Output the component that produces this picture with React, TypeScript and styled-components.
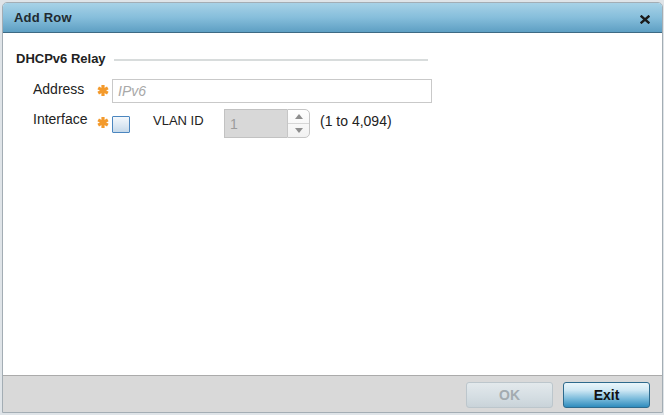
import React from "react";
import styled, { createGlobalStyle } from "styled-components";

const GlobalStyle = createGlobalStyle`
  html, body {
    margin: 0;
    padding: 0;
  }
  body {
    background: #dfe4e8;
    font-family: "Liberation Sans", Arial, sans-serif;
    color: #222;
  }
  #root {
    height: 415px;
  }
`;

const Page = styled.div`
  box-sizing: border-box;
  height: 415px;
  padding: 2px 1px 2px 2px;
`;

const Dialog = styled.div`
  box-sizing: border-box;
  height: 100%;
  display: flex;
  flex-direction: column;
  background: #ffffff;
  border: 1px solid #a3adb4;
  border-radius: 5px 5px 0 0;
  overflow: hidden;
`;

const TitleBar = styled.div`
  height: 30px;
  flex: none;
  display: flex;
  align-items: center;
  justify-content: space-between;
  padding: 0 12px 0 11px;
  box-sizing: border-box;
  background: linear-gradient(to bottom, #a7d2e7 0%, #86bedb 50%, #5e9fc3 100%);
  border-bottom: 1px solid #3d6a84;
`;

const Title = styled.span`
  font-size: 13px;
  line-height: 16px;
  font-weight: bold;
  color: #1f2a30;
  letter-spacing: 0.2px;
`;

const CloseButton = styled.span`
  display: flex;
  margin-top: 3px;
  cursor: pointer;
`;

const Body = styled.div`
  flex: 1;
  padding: 18px 13px 0 13px;
`;

const SectionHeader = styled.div`
  display: flex;
  align-items: flex-start;
`;

const SectionTitle = styled.span`
  font-size: 13px;
  line-height: 16px;
  font-weight: bold;
  color: #222;
`;

const Rule = styled.div`
  width: 314px;
  height: 2px;
  margin: 8px 0 0 8px;
  background: #d8dcdc;
`;

const Row = styled.div<{ $top: number }>`
  display: flex;
  align-items: flex-start;
  margin: ${(p) => p.$top}px 0 0 17px;
`;

const Label = styled.span<{ $size?: number; $width: number; $top: number }>`
  width: ${(p) => p.$width}px;
  flex: none;
  font-size: ${(p) => p.$size ?? 14}px;
  line-height: 16px;
  margin-top: ${(p) => p.$top}px;
  color: #222;
`;

const Star = styled.span<{ $top: number }>`
  width: 15px;
  flex: none;
  display: flex;
  margin-top: ${(p) => p.$top}px;
`;

const TextInput = styled.input`
  box-sizing: border-box;
  width: 320px;
  height: 24px;
  border: 1px solid #c9c9c9;
  padding: 0 5px;
  font-family: "Liberation Sans", Arial, sans-serif;
  font-size: 14px;
  outline: none;
  &::placeholder {
    font-style: italic;
    color: #a8a8a8;
  }
`;

const Checkbox = styled.span`
  box-sizing: border-box;
  width: 18px;
  height: 17px;
  margin-top: 7px;
  border: 1px solid #4b86bf;
  border-radius: 1px;
  background: linear-gradient(to bottom, #f4f8fc 0%, #dce8f3 55%, #c6d9ea 100%);
`;

const Spinner = styled.div`
  display: flex;
  width: 86px;
  height: 29px;
  flex: none;
`;

const SpinnerField = styled.div`
  box-sizing: border-box;
  width: 63px;
  height: 100%;
  background: #d8d8d8;
  border: 1px solid #c2c2c2;
  border-right: none;
  padding: 6px 0 0 5px;
  font-size: 14px;
  line-height: 16px;
  color: #9c9c9c;
`;

const SpinnerArrows = styled.div`
  box-sizing: border-box;
  width: 23px;
  height: 100%;
  display: flex;
  flex-direction: column;
  border: 1px solid #c6c6c6;
  border-radius: 0 5px 5px 0;
  background: linear-gradient(to bottom, #ffffff, #f1f1f1);
`;

const ArrowCell = styled.div<{ $divider?: boolean }>`
  flex: 1;
  display: flex;
  align-items: center;
  justify-content: center;
  border-bottom: ${(p) => (p.$divider ? "1px solid #d6d6d6" : "none")};
`;

const RangeText = styled.span`
  margin: 4px 0 0 10px;
  font-size: 14px;
  line-height: 16px;
  color: #222;
`;

const Footer = styled.div`
  flex: none;
  height: 37px;
  box-sizing: border-box;
  display: flex;
  justify-content: flex-end;
  align-items: flex-start;
  gap: 10px;
  padding: 6px 12px 0 0;
  background: #d9d9d9;
  border-top: 1px solid #ababab;
`;

const Button = styled.button<{ $primary?: boolean }>`
  box-sizing: border-box;
  width: 87px;
  height: 26px;
  font-family: "Liberation Sans", Arial, sans-serif;
  font-size: 14px;
  font-weight: bold;
  border-radius: 3px;
  padding: 0;
  cursor: ${(p) => (p.$primary ? "pointer" : "default")};
  color: ${(p) => (p.$primary ? "#111" : "#a3abb0")};
  border: 1px solid ${(p) => (p.$primary ? "#2d6a8d" : "#bcc6cc")};
  background: ${(p) =>
    p.$primary
      ? "linear-gradient(to bottom, #eaf6fb 0%, #cfe8f4 30%, #7cbcdc 65%, #2f8cbd 100%)"
      : "linear-gradient(to bottom, #e3e9ec 0%, #d4dde2 60%, #c9d3d9 100%)"};
`;

const Asterisk = () => (
  <svg width="12" height="11" viewBox="0 0 12 11">
    <g stroke="#f39a2c" strokeWidth="3.2" strokeLinecap="butt">
      <line x1="6" y1="0" x2="6" y2="11" />
      <line x1="1.2" y1="2.8" x2="10.8" y2="8.2" />
      <line x1="1.2" y1="8.2" x2="10.8" y2="2.8" />
    </g>
  </svg>
);

const CloseIcon = () => (
  <svg width="10" height="9" viewBox="0 0 10 9">
    <g stroke="#1b1b1b" strokeWidth="2.4" strokeLinecap="square">
      <line x1="1.5" y1="1.5" x2="8.5" y2="7.5" />
      <line x1="8.5" y1="1.5" x2="1.5" y2="7.5" />
    </g>
  </svg>
);

const Triangle = ({ up }: { up?: boolean }) => (
  <svg width="8" height="5" viewBox="0 0 8 5">
    <polygon points={up ? "0,5 8,5 4,0" : "0,0 8,0 4,5"} fill="#8e8e8e" />
  </svg>
);

export default function App() {
  return (
    <>
      <GlobalStyle />
      <Page>
        <Dialog>
          <TitleBar>
            <Title>Add Row</Title>
            <CloseButton>
              <CloseIcon />
            </CloseButton>
          </TitleBar>
          <Body>
            <SectionHeader>
              <SectionTitle>DHCPv6 Relay</SectionTitle>
              <Rule />
            </SectionHeader>
            <Row $top={12}>
              <Label $width={64} $top={2}>
                Address
              </Label>
              <Star $top={6}>
                <Asterisk />
              </Star>
              <TextInput placeholder="IPv6" />
            </Row>
            <Row $top={6}>
              <Label $width={64} $top={2}>
                Interface
              </Label>
              <Star $top={8}>
                <Asterisk />
              </Star>
              <Checkbox />
              <Label $size={13} $width={71} $top={4} style={{ marginLeft: 23 }}>
                VLAN ID
              </Label>
              <Spinner>
                <SpinnerField>1</SpinnerField>
                <SpinnerArrows>
                  <ArrowCell $divider>
                    <Triangle up />
                  </ArrowCell>
                  <ArrowCell>
                    <Triangle />
                  </ArrowCell>
                </SpinnerArrows>
              </Spinner>
              <RangeText>(1 to 4,094)</RangeText>
            </Row>
          </Body>
          <Footer>
            <Button disabled>OK</Button>
            <Button $primary>Exit</Button>
          </Footer>
        </Dialog>
      </Page>
    </>
  );
}
